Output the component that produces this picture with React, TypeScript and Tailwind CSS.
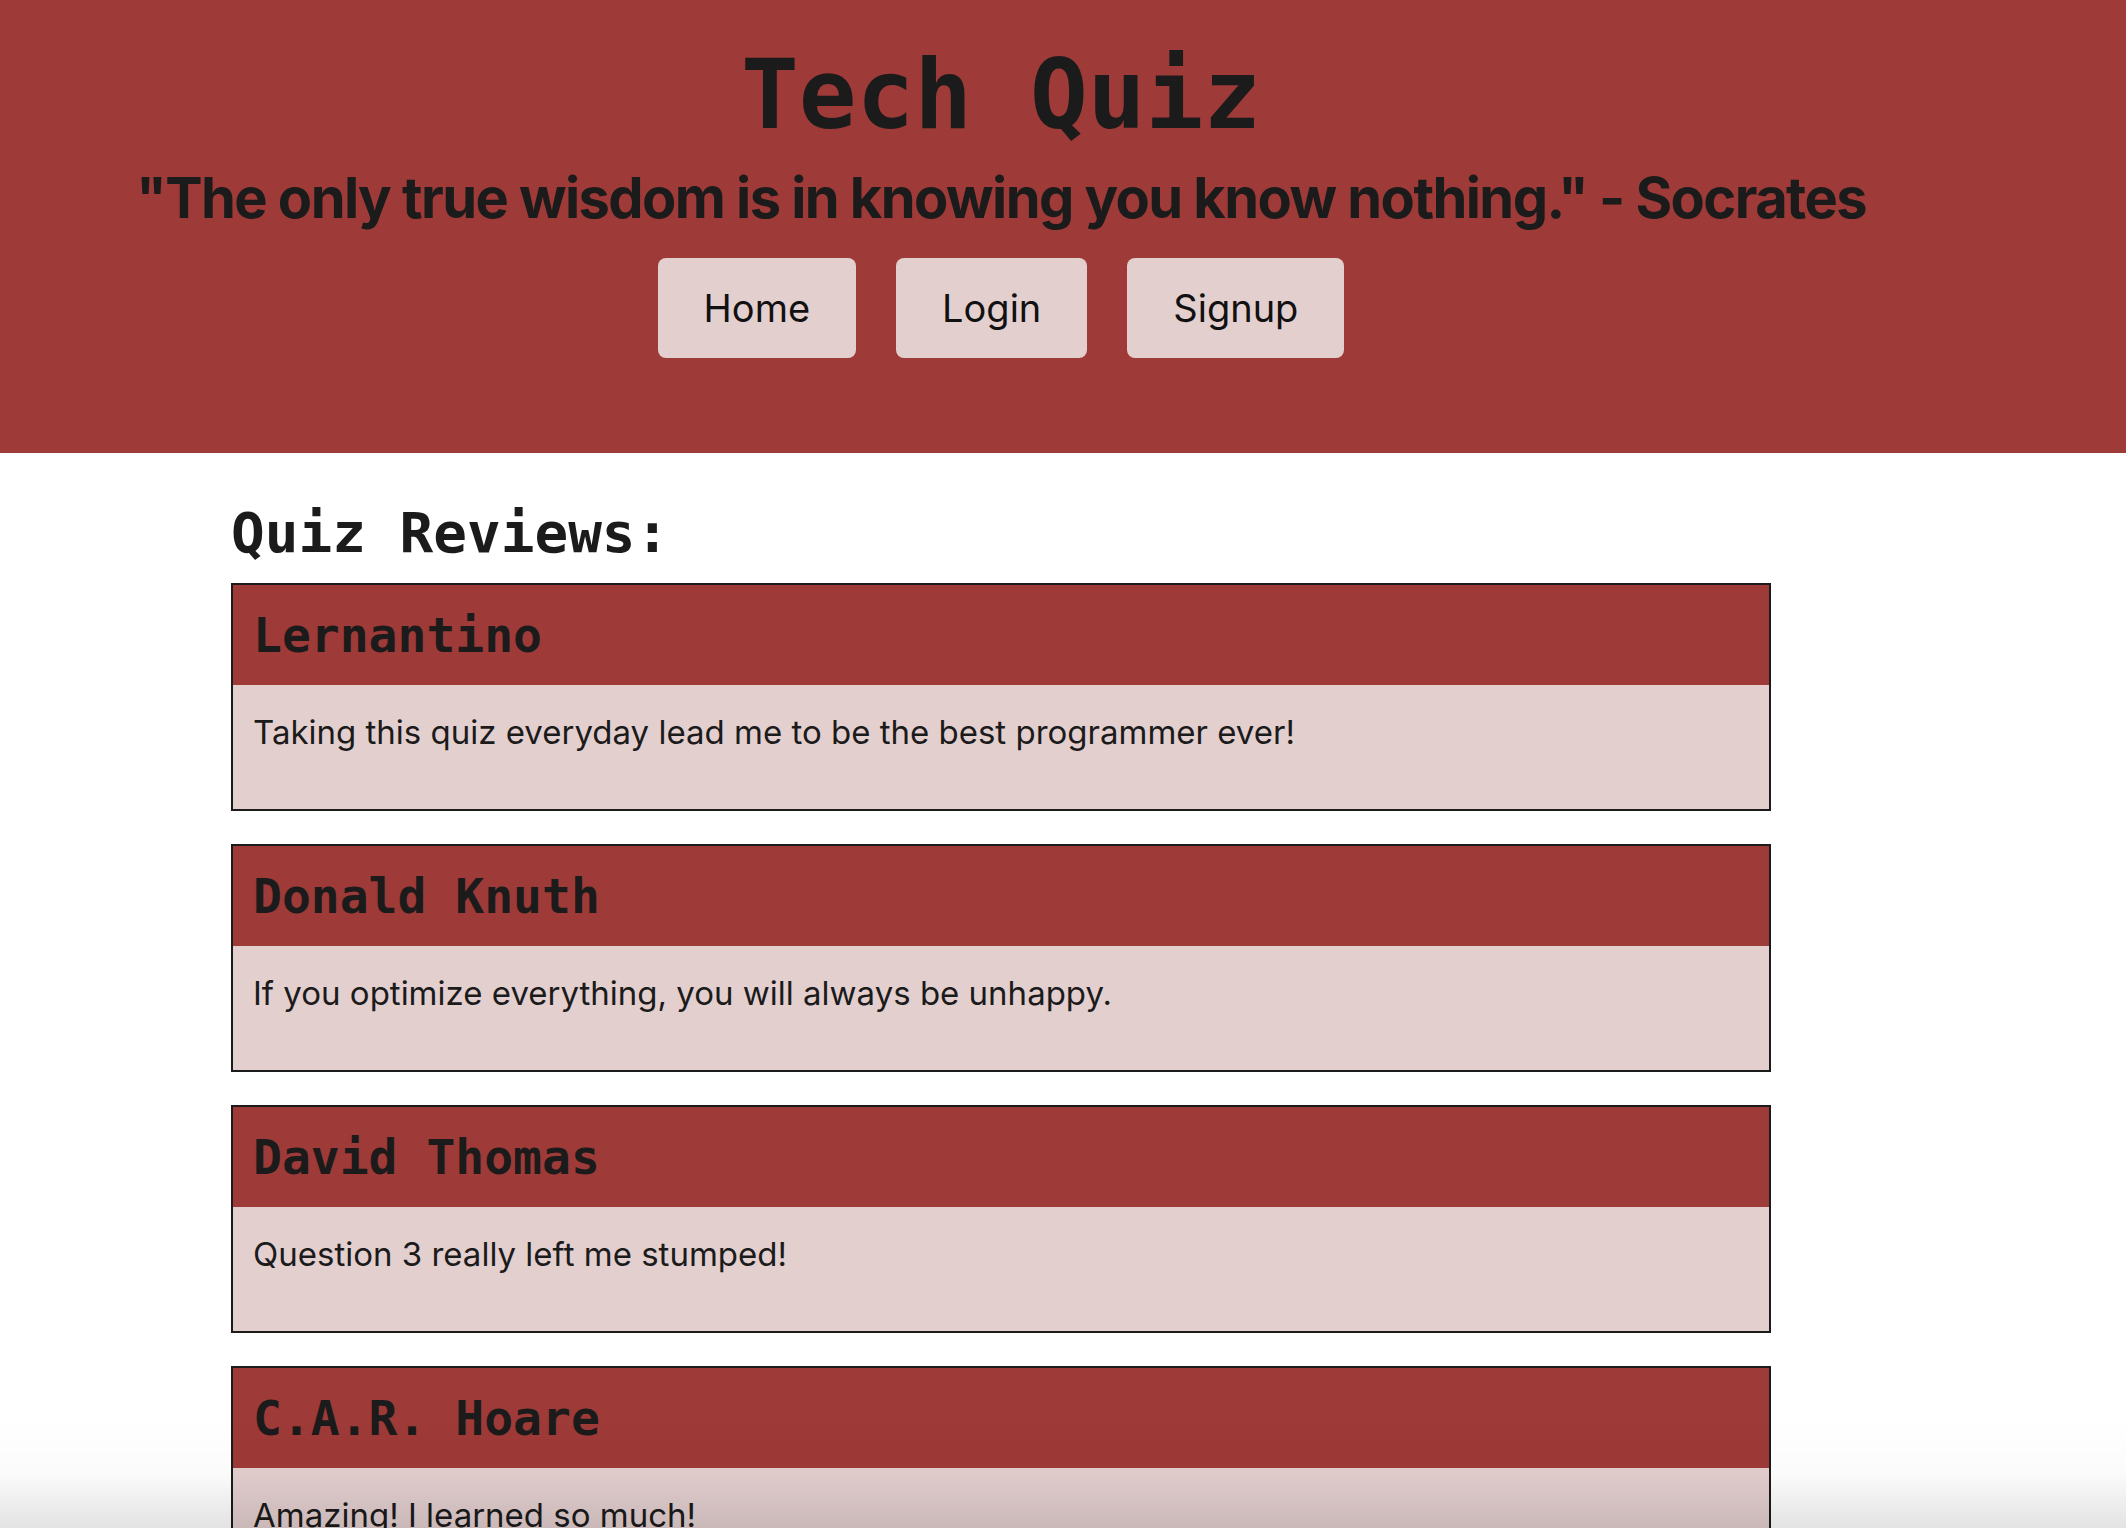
import React from "react";

const reviews = [
  { name: "Lernantino", text: "Taking this quiz everyday lead me to be the best programmer ever!" },
  { name: "Donald Knuth", text: "If you optimize everything, you will always be unhappy." },
  { name: "David Thomas", text: "Question 3 really left me stumped!" },
  { name: "C.A.R. Hoare", text: "Amazing! I learned so much!" },
];

const mono = "font-['DejaVu_Sans_Mono',Menlo,monospace]";

export default function App() {
  return (
    <div className="min-h-screen w-full bg-white text-[#1b1b1b] font-['Inter',sans-serif]">
      <header className="w-full bg-[#9e3a37] pt-[39px] pb-[95px]">
        <div className="w-[2002px] flex flex-col items-center">
          <h1 className={`${mono} font-bold text-[96px] leading-[112px]`}>Tech Quiz</h1>
          <h2 className="mt-[15px] font-bold text-[56px] leading-[64px] tracking-[-0.028em] whitespace-nowrap">
            "The only true wisdom is in knowing you know nothing." - Socrates
          </h2>
          <nav className="mt-[28px] flex gap-[40px]">
            {["Home", "Login", "Signup"].map((l) => (
              <button
                key={l}
                className="h-[100px] px-[46px] rounded-[8px] bg-[#e4cfcf] text-[38px] leading-[48px] text-[#111]"
              >
                {l}
              </button>
            ))}
          </nav>
        </div>
      </header>
      <main className="w-[2002px] flex flex-col items-center">
        <div className="w-[1540px] mt-[47px]">
          <h2 className={`${mono} font-bold text-[56px] leading-[66px]`}>Quiz Reviews:</h2>
          <div className="mt-[17px] flex flex-col gap-[33px]">
            {reviews.map((r) => (
              <div key={r.name} className="border-2 border-[#1b1b1b]">
                <div className="bg-[#9e3a37] h-[100px] px-[20px]">
                  <h3 className={`${mono} font-bold text-[48px] leading-[100px]`}>{r.name}</h3>
                </div>
                <div className="bg-[#e4cfcf] h-[124px] px-[20px] pt-[27px]">
                  <p className="text-[33px] leading-[40px]">{r.text}</p>
                </div>
              </div>
            ))}
          </div>
        </div>
      </main>
      <div className="fixed left-0 right-0 bottom-0 h-[110px] pointer-events-none bg-linear-to-b from-transparent via-[rgba(0,0,0,0.015)] to-[rgba(0,0,0,0.11)]" />
    </div>
  );
}
